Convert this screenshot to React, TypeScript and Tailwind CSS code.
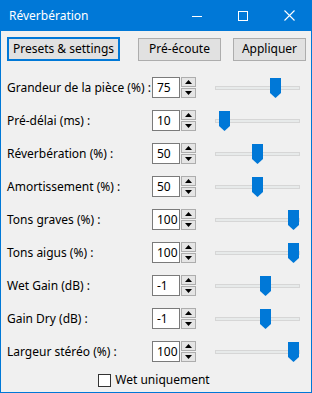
import React from "react";

const rows: { label: string; value: string; thumb: number }[] = [
  { label: "Grandeur de la pièce (%) :", value: "75", thumb: 55 },
  { label: "Pré-délai (ms) :", value: "10", thumb: 4 },
  { label: "Réverbération (%) :", value: "50", thumb: 37 },
  { label: "Amortissement (%) :", value: "50", thumb: 37 },
  { label: "Tons graves (%) :", value: "100", thumb: 73 },
  { label: "Tons aigus (%) :", value: "100", thumb: 73 },
  { label: "Wet Gain (dB) :", value: "-1", thumb: 45 },
  { label: "Gain Dry (dB) :", value: "-1", thumb: 45 },
  { label: "Largeur stéréo (%) :", value: "100", thumb: 73 },
];

function Spin({ value }: { value: string }) {
  return (
    <div className="flex items-center h-[21px]">
      <div className="w-[28px] h-[21px] bg-white border border-[#7a7a7a] flex items-center pl-[4px] text-[12px] text-black leading-none">
        {value}
      </div>
      <div className="ml-[1px] flex flex-col gap-[1px] h-[21px] w-[15px]">
        <div className="flex-1 bg-[#e5e5e5] border border-[#adadad] flex items-center justify-center">
          <svg width="7" height="4" viewBox="0 0 7 4">
            <path d="M0 4 L3.5 0 L7 4 Z" fill="#000" />
          </svg>
        </div>
        <div className="flex-1 bg-[#e5e5e5] border border-[#adadad] flex items-center justify-center">
          <svg width="7" height="4" viewBox="0 0 7 4">
            <path d="M0 0 L3.5 4 L7 0 Z" fill="#000" />
          </svg>
        </div>
      </div>
    </div>
  );
}

function Slider({ thumb }: { thumb: number }) {
  return (
    <div className="relative w-[85px] h-[20px] flex items-center">
      <div className="w-full h-[4px] bg-[#e7eaea] border border-[#d6d6d6]" />
      <svg
        className="absolute top-[0px]"
        style={{ left: thumb }}
        width="11"
        height="20"
        viewBox="0 0 11 20"
      >
        <path d="M0 0 H11 V15 L5.5 20 L0 15 Z" fill="#0078d7" />
      </svg>
    </div>
  );
}

export default function App() {
  return (
    <div
      className="w-[312px] h-[393px] flex flex-col bg-[#f0f0f0] text-black"
      style={{ fontFamily: '"Noto Sans", "Liberation Sans", sans-serif' }}
    >
      {/* title bar */}
      <div className="h-[31px] bg-[#0078d7] flex items-center text-white shrink-0">
        <span className="pl-[9px] text-[12px] flex-1">Réverbération</span>
        <div className="w-[46px] h-full flex items-center justify-center">
          <svg width="10" height="10" viewBox="0 0 10 10">
            <path d="M0 5.5 H10" stroke="#fff" strokeWidth="1" />
          </svg>
        </div>
        <div className="w-[46px] h-full flex items-center justify-center">
          <svg width="10" height="10" viewBox="0 0 10 10">
            <rect x="0.5" y="0.5" width="9" height="9" fill="none" stroke="#fff" strokeWidth="1" />
          </svg>
        </div>
        <div className="w-[46px] h-full flex items-center justify-center">
          <svg width="11" height="11" viewBox="0 0 11 11">
            <path d="M0.5 0.5 L10.5 10.5 M10.5 0.5 L0.5 10.5" stroke="#fff" strokeWidth="1.1" />
          </svg>
        </div>
      </div>
      {/* body */}
      <div className="flex-1 flex flex-col border-x border-b border-[#0078d7]">
        <div className="flex items-center mt-[6px] pl-[6px] h-[24px]">
          <div className="w-[113px] h-[24px] border-2 border-[#0078d7] bg-[#e1e1e1] flex items-center justify-center text-[12px]">
            Presets &amp; settings
          </div>
          <div className="ml-[18px] w-[83px] h-[23px] border border-[#adadad] bg-[#e1e1e1] flex items-center justify-center text-[12px]">
            Pré-écoute
          </div>
          <div className="ml-[12px] w-[73px] h-[23px] border border-[#adadad] bg-[#e1e1e1] flex items-center justify-center text-[12px]">
            Appliquer
          </div>
        </div>
        <div className="flex flex-col mt-[10px]">
          {rows.map((r) => (
            <div key={r.label} className="h-[33px] flex items-center">
              <div className="w-[151px] pl-[6px] text-[12px] whitespace-nowrap">{r.label}</div>
              <Spin value={r.value} />
              <div className="ml-[19px]">
                <Slider thumb={r.thumb} />
              </div>
            </div>
          ))}
        </div>
        <div className="flex-1 flex items-center justify-center pr-[4px]">
          <div className="w-[13px] h-[13px] border border-[#333] bg-white" />
          <span className="ml-[4px] text-[12px]">Wet uniquement</span>
        </div>
      </div>
    </div>
  );
}
